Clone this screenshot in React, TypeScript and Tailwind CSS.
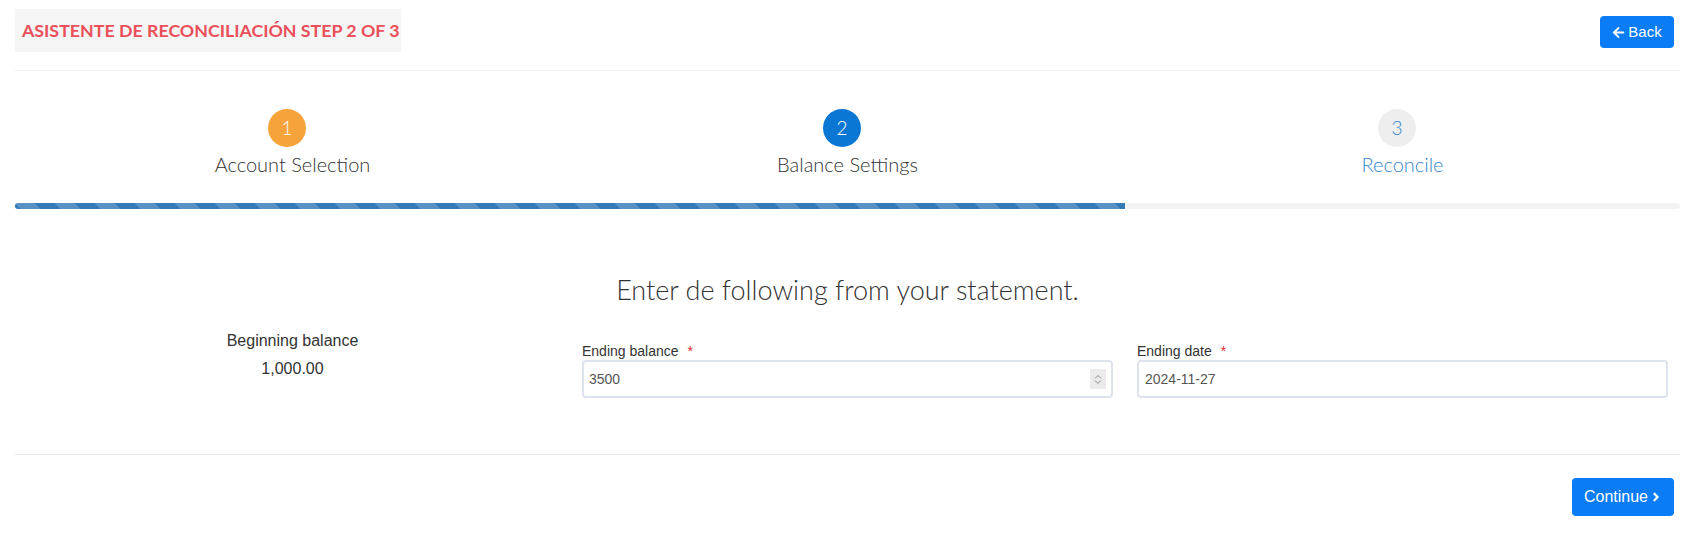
import React from 'react';
import { FaArrowLeft, FaAngleRight } from 'react-icons/fa';

type Step = {
  num: number;
  label: string;
  circle: string;
  text: string;
};

const steps: Step[] = [
  { num: 1, label: 'Account Selection', circle: 'bg-[#f7a33b] text-white', text: 'text-[#333333]' },
  { num: 2, label: 'Balance Settings', circle: 'bg-[#0a77d4] text-white', text: 'text-[#333333]' },
  { num: 3, label: 'Reconcile', circle: 'bg-[#eeeeee] text-[#3586cc]', text: 'text-[#3586cc]' },
];

const App = () => {
  return (
    <div className="w-full min-h-[558px] bg-white pl-[15px] pr-[22px] font-['Liberation_Sans',Arial,sans-serif]">
      {/* header */}
      <div className="flex items-start justify-between pt-[9px] h-[70px]">
        <h2 className="h-[43px] bg-[#f5f5f5] pl-[7px] pr-[1px] flex items-center font-['Lato',sans-serif] font-bold text-[17.8px] text-[#ea4f5a]">
          ASISTENTE DE RECONCILIACIÓN STEP 2 OF 3
        </h2>
        <button
          type="button"
          className="mt-[7px] mr-[6px] h-[32px] w-[74px] rounded-[4px] bg-[#0a7cf6] text-white text-[15px] flex items-center justify-center gap-[3px]"
        >
          <FaArrowLeft className="w-[13px] h-[13px]" />
          Back
        </button>
      </div>
      <div className="border-t border-[#eceef4]" />

      {/* wizard steps */}
      <div className="grid grid-cols-3 pt-[38px]">
        {steps.map((s) => (
          <div key={s.num} className="flex flex-col items-center">
            <div
              className={`mr-[11px] w-[38px] h-[38px] rounded-full flex items-center justify-center font-['Lato',sans-serif] font-light text-[19px] ${s.circle}`}
            >
              {s.num}
            </div>
            <div className={`mt-[5px] font-['Lato',sans-serif] font-light text-[20px] leading-[24px] ${s.text}`}>
              {s.label}
            </div>
          </div>
        ))}
      </div>

      {/* progress */}
      <div className="mt-[27px] h-[6px] w-full bg-[#f3f3f3] rounded-[3px] overflow-hidden">
        <div className="h-full w-2/3 bg-[#337ab7] bg-[linear-gradient(45deg,rgba(255,255,255,.18)_25%,transparent_25%,transparent_50%,rgba(255,255,255,.18)_50%,rgba(255,255,255,.18)_75%,transparent_75%,transparent)] bg-[length:40px_40px]" />
      </div>

      {/* balance form */}
      <h3 className="mt-[65px] text-center font-['Lato',sans-serif] font-light text-[27px] leading-[32px] text-[#333333]">
        Enter de following from your statement.
      </h3>

      <div className="mt-[23px] grid grid-cols-3">
        <div className="flex flex-col items-center text-[16px] leading-[24px] text-[#333333]">
          <div>Beginning balance</div>
          <div className="mt-[4px]">1,000.00</div>
        </div>

        <div className="px-3 pt-[14px]">
          <label className="block text-[14px] leading-[17px] text-[#333333]">
            Ending balance <span className="ml-[5px] text-[#e3262f]">*</span>
          </label>
          <div className="relative">
            <input
              type="text"
              defaultValue="3500"
              className="w-full h-[38px] rounded-[4px] border-2 border-[#dfe3ed] px-[5px] text-[14px] text-[#555555] outline-none"
            />
            <div className="absolute right-[7px] top-[9px] w-[16px] h-[20px] bg-[#ebebeb] flex flex-col items-center justify-center gap-[1px]">
              <svg width="8" height="5" viewBox="0 0 8 5" fill="none" stroke="#8a8a8a" strokeWidth="1">
                <path d="M1 4.5 L4 1.5 L7 4.5" />
              </svg>
              <svg width="8" height="5" viewBox="0 0 8 5" fill="none" stroke="#8a8a8a" strokeWidth="1">
                <path d="M1 0.5 L4 3.5 L7 0.5" />
              </svg>
            </div>
          </div>
        </div>

        <div className="px-3 pt-[14px]">
          <label className="block text-[14px] leading-[17px] text-[#333333]">
            Ending date <span className="ml-[5px] text-[#e3262f]">*</span>
          </label>
          <input
            type="text"
            defaultValue="2024-11-27"
            className="w-full h-[38px] rounded-[4px] border-2 border-[#dfe3ed] px-[6px] text-[14px] text-[#555555] outline-none"
          />
        </div>
      </div>

      <div className="mt-[56px] border-t border-[#e6e6e6]" />

      <div className="flex justify-end pt-[23px]">
        <button
          type="button"
          className="mr-[6px] h-[38px] w-[102px] rounded-[4px] bg-[#0a7cf6] text-white text-[16px] flex items-center justify-center gap-[2px]"
        >
          Continue
          <FaAngleRight className="w-[12px] h-[14px]" />
        </button>
      </div>
    </div>
  );
};

export default App;
